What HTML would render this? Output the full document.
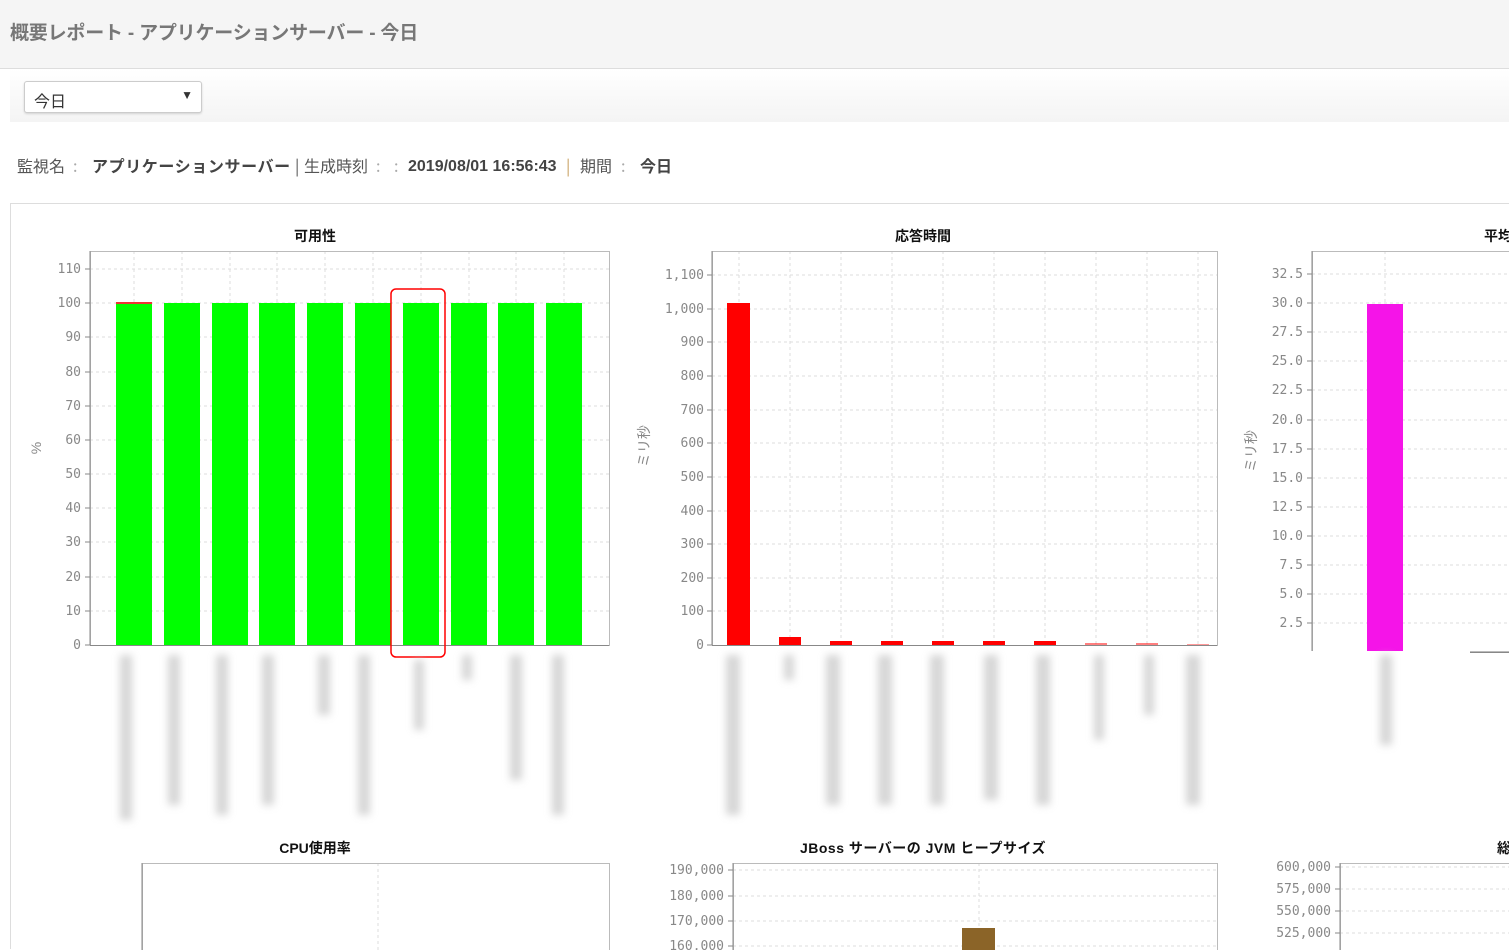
<!DOCTYPE html>
<html><head><meta charset="utf-8"><style>
html,body{margin:0;padding:0;width:1509px;height:950px;overflow:hidden;background:#fff;font-family:"Liberation Sans","Noto Sans CJK JP",sans-serif;}
.hdr{position:absolute;left:0;top:0;width:1509px;height:68px;background:#f5f5f5;border-bottom:1px solid #ddd;}
.hdr span{position:absolute;left:10px;top:18px;font-size:19px;font-weight:bold;color:#777;letter-spacing:-0.2px;}
.bar{position:absolute;left:10px;top:69px;width:1499px;height:53px;background:linear-gradient(#fff,#f4f4f4);}
.sel{position:absolute;left:24px;top:81px;width:176px;height:30px;border:1px solid #ccc;border-radius:3px;background:#fff;box-shadow:0 1px 2px rgba(0,0,0,.15);font-size:16px;color:#333;}
.sel span{position:absolute;left:9px;top:6px;}
.sel i{position:absolute;right:8px;top:6px;font-style:normal;font-size:12px;}
.info span,.info b{position:absolute;top:155px;height:20px;line-height:20px;font-size:16px;white-space:nowrap;font-family:"Noto Sans CJK JP",sans-serif;}
.info span{color:#555;}
.info b{color:#444;}
.info .n{font-family:"Liberation Sans",sans-serif;top:157px;}
.info .c{color:#aaa;}
.box{position:absolute;left:10px;top:203px;width:1510px;height:745px;border:1px solid #ddd;border-bottom:none;}
svg{position:absolute;left:0;top:0;}
</style></head><body>
<div class="hdr"><span>概要レポート - アプリケーションサーバー - 今日</span></div>
<div class="bar"></div>
<div class="sel"><span>今日</span><i>▼</i></div>
<div class="info">
<span style="left:17px">監視名</span><span class="c" style="left:73px">:</span>
<b style="left:92px;letter-spacing:0.6px">アプリケーションサーバー</b>
<span style="left:295px">|</span><span style="left:304px">生成時刻</span><span class="c" style="left:376px">:</span><span class="c" style="left:394px">:</span>
<b class="n" style="left:408px">2019/08/01 16:56:43</b>
<span style="left:566px;color:#c8a060">|</span><span style="left:580px">期間</span><span class="c" style="left:621px">:</span>
<b style="left:640px">今日</b>
</div>
<div class="box"></div>
<svg width="1509" height="950" viewBox="0 0 1509 950">
<defs><filter id="bl" x="-50%" y="-20%" width="200%" height="140%"><feGaussianBlur stdDeviation="4"/></filter></defs>
<g font-family="Liberation Sans,Noto Sans CJK JP,sans-serif" font-weight="bold" font-size="14" fill="#111" text-anchor="middle">
<text x="315" y="241">可用性</text><text x="923" y="241">応答時間</text><text x="1484" y="241" text-anchor="start">平均</text>
<text x="315" y="853">CPU使用率</text><text x="923" y="853" letter-spacing="0.5">JBoss サーバーの JVM ヒープサイズ</text><text x="1497" y="853" text-anchor="start">総</text>
</g>
<g stroke="#ddd" stroke-dasharray="3,3" stroke-width="1">
<path d="M90 269H609M90 303H609M90 337H609M90 372H609M90 406H609M90 440H609M90 474H609M90 508H609M90 542H609M90 577H609M90 611H609"/>
<path d="M134 251V645M182 251V645M230 251V645M277 251V645M325 251V645M373 251V645M421 251V645M469 251V645M516 251V645M564 251V645"/>
<path d="M712 275H1217M712 309H1217M712 342H1217M712 376H1217M712 410H1217M712 443H1217M712 477H1217M712 511H1217M712 544H1217M712 578H1217M712 611H1217"/>
<path d="M739 251V645M790 251V645M841 251V645M892 251V645M943 251V645M994 251V645M1045 251V645M1096 251V645M1147 251V645M1198 251V645"/>
<path d="M1312 274H1509M1312 303H1509M1312 332H1509M1312 361H1509M1312 390H1509M1312 420H1509M1312 449H1509M1312 478H1509M1312 507H1509M1312 536H1509M1312 565H1509M1312 594H1509M1312 623H1509"/>
<path d="M1385 251V651"/>
<path d="M378 863V950M979 863V950M733 870H1217M733 896H1217M733 921H1217M733 946H1217M1340 867H1509M1340 889H1509M1340 911H1509M1340 933H1509"/>
</g>
<g fill="none" stroke="#bbb" stroke-width="1">
<rect x="90.5" y="251.5" width="519" height="394"/>
<rect x="712.5" y="251.5" width="505" height="394"/>
<rect x="1312.5" y="251.5" width="210" height="400"/>
<rect x="142.5" y="863.5" width="467" height="100"/>
<rect x="733.5" y="863.5" width="484" height="100"/>
<rect x="1340.5" y="863.5" width="200" height="100"/>
</g>
<g stroke="#888"><path d="M90 645.5H609M90 251V645M712 645.5H1217M712 251V645M1312 251V651M1470 652.5H1509M142 863V950M733 863V950M1340 863V950"/>
<path d="M85 269h5M85 303h5M85 337h5M85 372h5M85 406h5M85 440h5M85 474h5M85 508h5M85 542h5M85 577h5M85 611h5M85 645h5"/>
<path d="M707 275h5M707 309h5M707 342h5M707 376h5M707 410h5M707 443h5M707 477h5M707 511h5M707 544h5M707 578h5M707 611h5M707 645h5"/>
<path d="M1307 274h5M1307 303h5M1307 332h5M1307 361h5M1307 390h5M1307 420h5M1307 449h5M1307 478h5M1307 507h5M1307 536h5M1307 565h5M1307 594h5M1307 623h5M728 870h5M728 896h5M728 921h5M728 946h5M1335 867h5M1335 889h5M1335 911h5M1335 933h5"/></g>
<g font-family="DejaVu Sans Mono,Liberation Mono,monospace" font-size="13" fill="#888" text-anchor="end">
<text x="81" y="273">110</text><text x="81" y="307">100</text><text x="81" y="341">90</text><text x="81" y="376">80</text><text x="81" y="410">70</text><text x="81" y="444">60</text><text x="81" y="478">50</text><text x="81" y="512">40</text><text x="81" y="546">30</text><text x="81" y="581">20</text><text x="81" y="615">10</text><text x="81" y="649">0</text>
<text x="704" y="279">1,100</text><text x="704" y="313">1,000</text><text x="704" y="346">900</text><text x="704" y="380">800</text><text x="704" y="414">700</text><text x="704" y="447">600</text><text x="704" y="481">500</text><text x="704" y="515">400</text><text x="704" y="548">300</text><text x="704" y="582">200</text><text x="704" y="615">100</text><text x="704" y="649">0</text>
<text x="1303" y="278">32.5</text><text x="1303" y="307">30.0</text><text x="1303" y="336">27.5</text><text x="1303" y="365">25.0</text><text x="1303" y="394">22.5</text><text x="1303" y="424">20.0</text><text x="1303" y="453">17.5</text><text x="1303" y="482">15.0</text><text x="1303" y="511">12.5</text><text x="1303" y="540">10.0</text><text x="1303" y="569">7.5</text><text x="1303" y="598">5.0</text><text x="1303" y="627">2.5</text>
<text x="724" y="874">190,000</text><text x="724" y="900">180,000</text><text x="724" y="925">170,000</text><text x="724" y="950">160,000</text>
<text x="1331" y="871">600,000</text><text x="1331" y="893">575,000</text><text x="1331" y="915">550,000</text><text x="1331" y="937">525,000</text>
</g>
<g font-family="Liberation Sans,Noto Sans CJK JP,sans-serif" font-size="14" fill="#888" text-anchor="middle">
<text transform="translate(41,448) rotate(-90)">%</text>
<text transform="translate(649,446) rotate(-90)">ミリ秒</text>
<text transform="translate(1256,451) rotate(-90)">ミリ秒</text>
</g>
<g fill="#00ff00">
<rect x="116" y="303" width="36" height="342"/><rect x="164" y="303" width="36" height="342"/><rect x="212" y="303" width="36" height="342"/><rect x="259" y="303" width="36" height="342"/><rect x="307" y="303" width="36" height="342"/><rect x="355" y="303" width="36" height="342"/><rect x="403" y="303" width="36" height="342"/><rect x="451" y="303" width="36" height="342"/><rect x="498" y="303" width="36" height="342"/><rect x="546" y="303" width="36" height="342"/>
</g>
<rect x="116" y="302" width="36" height="2" fill="#e33"/>
<g fill="#ff0000">
<rect x="727" y="303" width="23" height="342"/><rect x="779" y="637" width="22" height="8"/><rect x="830" y="641" width="22" height="4"/><rect x="881" y="641" width="22" height="4"/><rect x="932" y="641" width="22" height="4"/><rect x="983" y="641" width="22" height="4"/><rect x="1034" y="641" width="22" height="4"/>
<rect x="1085" y="643" width="22" height="2" opacity=".5"/><rect x="1136" y="643" width="22" height="2" opacity=".5"/><rect x="1187" y="644" width="22" height="1" opacity=".4"/>
</g>
<rect x="1367" y="304" width="36" height="348" fill="#f514e8"/>
<rect x="962" y="928" width="33" height="22" fill="#8b6428"/>
<rect x="1275" y="651" width="195" height="30" fill="#fff"/>
<rect x="391" y="289" width="54" height="368" rx="5" fill="none" stroke="#f00" stroke-width="1.5"/>
<g fill="#ccc" filter="url(#bl)" opacity=".8">
<rect x="120" y="655" width="12" height="165"/><rect x="168" y="655" width="12" height="150"/><rect x="216" y="655" width="12" height="160"/><rect x="262" y="655" width="12" height="150"/><rect x="318" y="655" width="12" height="60"/><rect x="358" y="655" width="12" height="160"/><rect x="414" y="660" width="10" height="70"/><rect x="462" y="655" width="10" height="25"/><rect x="510" y="655" width="12" height="125"/><rect x="552" y="655" width="12" height="160"/>
<rect x="726" y="655" width="14" height="160"/><rect x="784" y="655" width="10" height="25"/><rect x="826" y="655" width="14" height="150"/><rect x="878" y="655" width="14" height="150"/><rect x="930" y="655" width="14" height="150"/><rect x="984" y="655" width="14" height="145"/><rect x="1036" y="655" width="14" height="150"/><rect x="1094" y="655" width="10" height="85"/><rect x="1144" y="655" width="10" height="60"/><rect x="1186" y="655" width="14" height="150"/>
<rect x="1380" y="655" width="12" height="90"/>
</g>
</svg>
</body></html>
